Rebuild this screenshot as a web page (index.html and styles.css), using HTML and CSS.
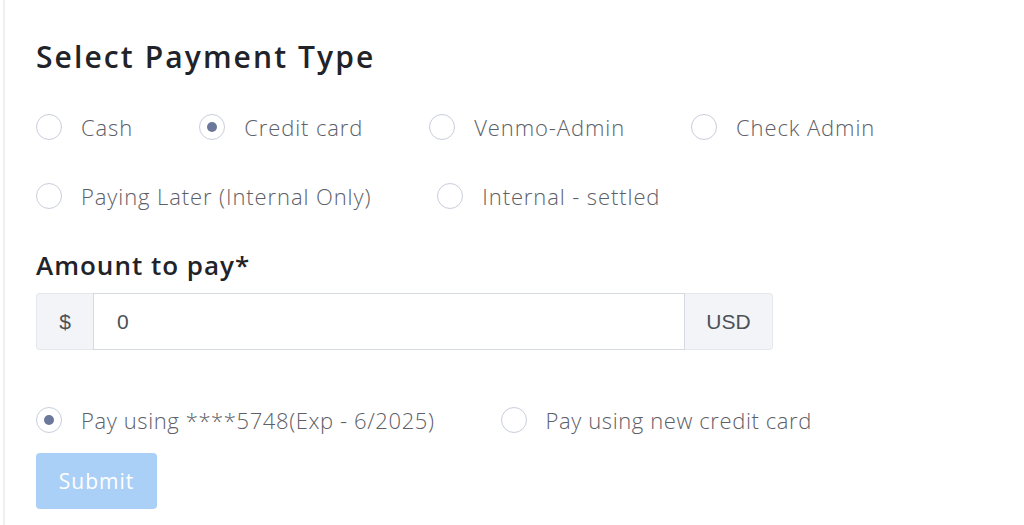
FILE: index.html
```html
<!DOCTYPE html>
<html>
<head>
<meta charset="utf-8">
<link rel="stylesheet" href="styles.css">
</head>
<body>
<div class="page">
  <h2 class="title">Select Payment Type</h2>
  <div class="options">
    <label class="opt"><span class="radio"></span><span class="lbl">Cash</span></label>
    <label class="opt"><span class="radio checked"></span><span class="lbl">Credit card</span></label>
    <label class="opt"><span class="radio"></span><span class="lbl">Venmo-Admin</span></label>
    <label class="opt"><span class="radio"></span><span class="lbl">Check Admin</span></label>
    <label class="opt"><span class="radio"></span><span class="lbl">Paying Later (Internal Only)</span></label>
    <label class="opt"><span class="radio"></span><span class="lbl">Internal - settled</span></label>
  </div>
  <h3 class="amount-label">Amount to pay*</h3>
  <div class="input-group">
    <span class="addon addon-left">$</span>
    <span class="field">0</span>
    <span class="addon addon-right">USD</span>
  </div>
  <div class="options pay">
    <label class="opt"><span class="radio checked"></span><span class="lbl">Pay using ****5748(Exp - 6/2025)</span></label>
    <label class="opt"><span class="radio"></span><span class="lbl">Pay using new credit card</span></label>
  </div>
  <button class="submit">Submit</button>
</div>
</body>
</html>
```

FILE: styles.css
```css
html, body {
  margin: 0;
  padding: 0;
  background: #ffffff;
  height: 100%;
}
body {
  font-family: "Open Sans", "Liberation Sans", sans-serif;
}
.page {
  margin-left: 3px;
  border-left: 2px solid #eff0f4;
  padding-left: 31px;
  padding-top: 37px;
  min-height: 100%;
  box-sizing: border-box;
}
.title {
  margin: 0;
  font-size: 30px;
  line-height: 40px;
  font-weight: 600;
  color: #212328;
  letter-spacing: 2.1px;
}
.options {
  display: flex;
  flex-wrap: wrap;
  column-gap: 66px;
  row-gap: 29px;
  margin-top: 30px;
}
.opt {
  display: flex;
  align-items: center;
  height: 40px;
  gap: 19px;
}
.radio {
  width: 26px;
  height: 26px;
  box-sizing: border-box;
  border: 1.5px solid #c9cedb;
  border-radius: 50%;
  display: flex;
  align-items: center;
  justify-content: center;
  flex: none;
}
.radio.checked::after {
  content: "";
  width: 10px;
  height: 10px;
  border-radius: 50%;
  background: #6b789b;
}
.lbl {
  font-size: 22px;
  font-weight: 300;
  color: #5d6067;
  letter-spacing: 0.9px;
}
.pay .lbl {
  letter-spacing: 0.6px;
}
.amount-label {
  margin: 31px 0 0;
  font-size: 26px;
  line-height: 36px;
  font-weight: 600;
  color: #212328;
  letter-spacing: 1px;
}
.input-group {
  display: flex;
  margin-top: 10px;
  width: 737px;
  height: 57px;
  box-sizing: border-box;
}
.addon {
  display: flex;
  align-items: center;
  justify-content: center;
  background: #f3f4f8;
  border: 1px solid #e4e7ec;
  color: #4d5156;
  font-family: "Liberation Sans", Arial, sans-serif;
  font-size: 21px;
  box-sizing: border-box;
}
.addon-left {
  width: 57px;
  border-right: none;
  border-radius: 4px 0 0 4px;
}
.addon-right {
  width: 88px;
  border-left: none;
  border-radius: 0 4px 4px 0;
}
.field {
  flex: 1;
  display: flex;
  align-items: center;
  padding-left: 23px;
  border: 1.5px solid #d5dae0;
  font-family: "Liberation Sans", Arial, sans-serif;
  font-size: 21px;
  color: #4d5156;
  box-sizing: border-box;
}
.options.pay {
  margin-top: 50px;
}
.submit {
  display: block;
  margin-top: 13px;
  width: 121px;
  height: 56px;
  border: none;
  border-radius: 4px;
  background: #abd0f7;
  color: #ffffff;
  font-family: "Open Sans", "Liberation Sans", sans-serif;
  font-size: 21px;
  font-weight: 400;
  letter-spacing: 1px;
  padding: 0;
}
```
